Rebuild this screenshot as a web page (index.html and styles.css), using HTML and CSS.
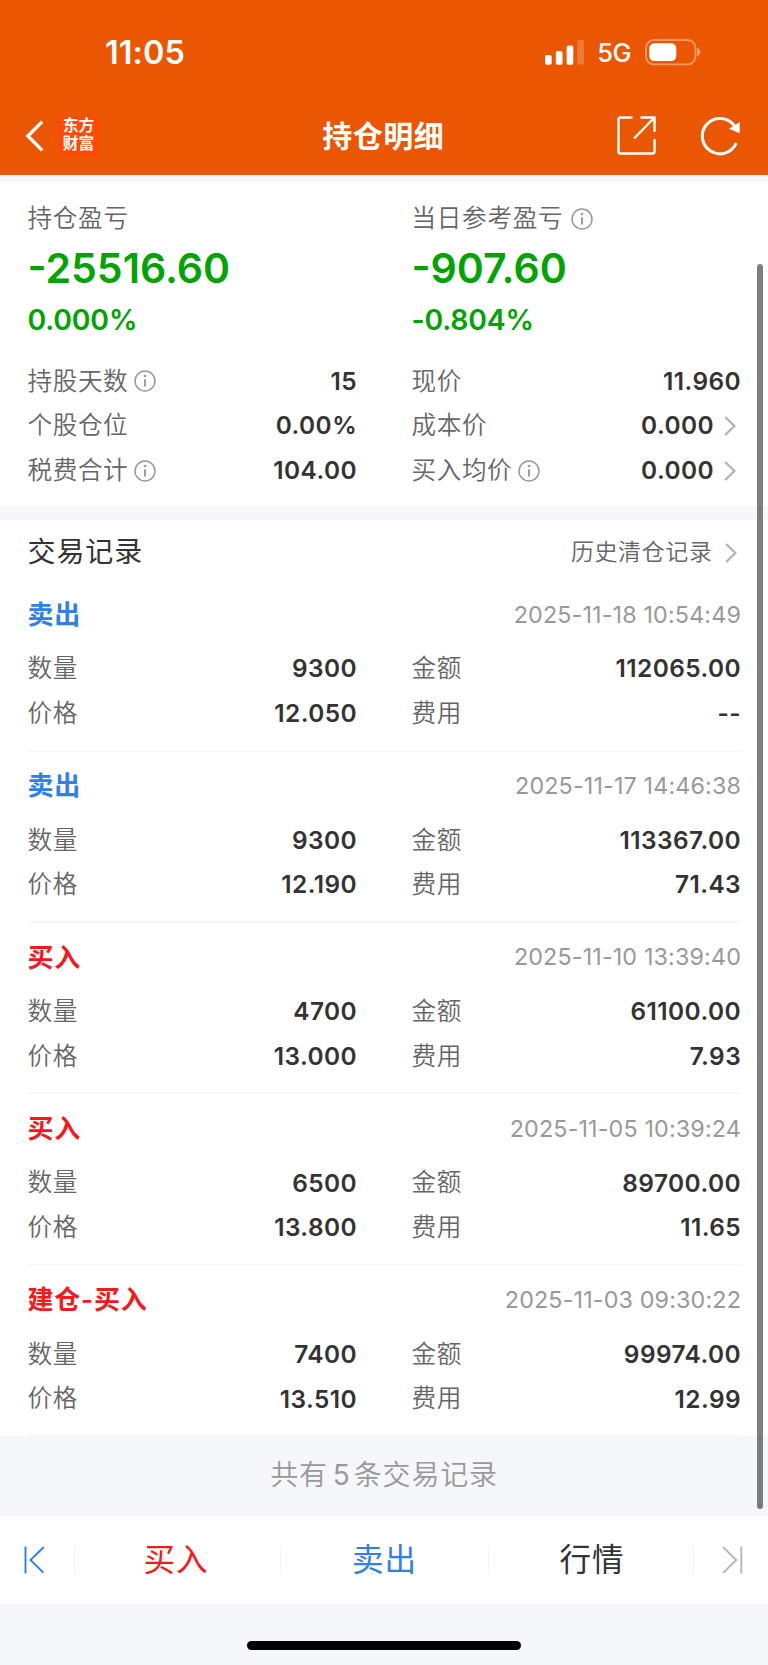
FILE: index.html
```html
<!DOCTYPE html>
<html lang="zh-CN">
<head>
<meta charset="utf-8">
<title>持仓明细</title>
<link rel="stylesheet" href="styles.css">
</head>
<body>
<svg class="defs" width="0" height="0">
  <symbol id="info" viewBox="0 0 22 22"><circle cx="11" cy="11" r="10" fill="none" stroke="#999" stroke-width="1.5"/><circle cx="11" cy="6" r="1.3" fill="#999"/><path d="M11 9.2V16.6" stroke="#999" stroke-width="1.9" fill="none"/></symbol>
  <symbol id="chev" viewBox="0 0 12 20"><path d="M1.2 1L10.4 10L1.2 19" fill="none" stroke="#b3b3b3" stroke-width="2.4"/></symbol>
</svg>
<header class="header">
  <div class="status">
    <span class="time">11:05</span>
    <div class="signals">
      <svg class="bars" width="39" height="25" viewBox="0 0 39 25" fill="#fff"><rect x="0" y="15" width="6.7" height="9.7" rx="1.8"/><rect x="10.8" y="11" width="6.7" height="13.7" rx="1.8"/><rect x="21.6" y="5.5" width="6.7" height="19.2" rx="1.8"/><rect x="32.3" y="0" width="6.7" height="24.7" rx="1.8" opacity=".22"/></svg>
      <span class="net">5G</span>
      <svg class="battery" width="56" height="27" viewBox="0 0 56 27"><rect x="1" y="1" width="49.5" height="24.4" rx="8" fill="none" stroke="#fff" stroke-opacity=".4" stroke-width="1.9"/><rect x="4.3" y="4.3" width="27" height="17.8" rx="5" fill="#fff"/><path d="M52.2 8.8C56.2 10.2 56.2 16.2 52.2 17.6Z" fill="#fff" fill-opacity=".45"/></svg>
    </div>
  </div>
  <nav class="nav">
    <div class="nav-left">
      <svg width="19" height="32" viewBox="0 0 19 32"><path d="M17.2 1.6L2.9 16L17.2 30.4" fill="none" stroke="#fff" stroke-width="3.4"/></svg>
      <div class="logo"><span>东方</span><span>财富</span></div>
    </div>
    <h1 class="title">持仓明细</h1>
    <div class="nav-right">
      <svg width="39" height="39" viewBox="0 0 39 39" fill="none" stroke="#fff" stroke-width="2.4"><path d="M15.5 1.5H3.5A2 2 0 0 0 1.5 3.5V35.5A2 2 0 0 0 3.5 37.5H35.5A2 2 0 0 0 37.5 35.5V23M23.5 1.5H37.5V16M37.5 1.5L17 22.5"/></svg>
      <svg width="41" height="40" viewBox="0 0 41 40"><path d="M36.2 27.2A17.7 17.7 0 1 1 34.3 9.7" fill="none" stroke="#fff" stroke-width="3"/><path d="M39.7 6V17.3L29 12.8Z" fill="#fff"/></svg>
    </div>
  </nav>
</header>

<main class="main">
  <section class="summary">
    <div class="two">
      <div class="pnl"><div class="cap">持仓盈亏</div><div class="big">-25516.60</div><div class="pct">0.000%</div></div>
      <div class="pnl"><div class="cap">当日参考盈亏<svg class="info wide"><use href="#info"/></svg></div><div class="big">-907.60</div><div class="pct">-0.804%</div></div>
    </div>
    <div class="two facts">
      <div class="row"><span class="k">持股天数<svg class="info"><use href="#info"/></svg></span><b class="v">15</b></div>
      <div class="row"><span class="k">现价</span><b class="v">11.960</b></div>
      <div class="row"><span class="k">个股仓位</span><b class="v">0.00%</b></div>
      <div class="row"><span class="k">成本价</span><b class="v">0.000<svg class="chev"><use href="#chev"/></svg></b></div>
      <div class="row"><span class="k">税费合计<svg class="info"><use href="#info"/></svg></span><b class="v">104.00</b></div>
      <div class="row"><span class="k">买入均价<svg class="info"><use href="#info"/></svg></span><b class="v">0.000<svg class="chev"><use href="#chev"/></svg></b></div>
    </div>
  </section>

  <section class="trades">
    <div class="heading"><h2>交易记录</h2><span class="history">历史清仓记录<svg class="chev"><use href="#chev"/></svg></span></div>

    <article class="record">
      <div class="rec-head"><span class="sell">卖出</span><time>2025-11-18 10:54:49</time></div>
      <div class="two">
        <div class="row"><span class="k">数量</span><b class="v">9300</b></div><div class="row"><span class="k">金额</span><b class="v">112065.00</b></div>
        <div class="row"><span class="k">价格</span><b class="v">12.050</b></div><div class="row"><span class="k">费用</span><b class="v">--</b></div>
      </div>
    </article>
    <article class="record">
      <div class="rec-head"><span class="sell">卖出</span><time>2025-11-17 14:46:38</time></div>
      <div class="two">
        <div class="row"><span class="k">数量</span><b class="v">9300</b></div><div class="row"><span class="k">金额</span><b class="v">113367.00</b></div>
        <div class="row"><span class="k">价格</span><b class="v">12.190</b></div><div class="row"><span class="k">费用</span><b class="v">71.43</b></div>
      </div>
    </article>
    <article class="record">
      <div class="rec-head"><span class="buy">买入</span><time>2025-11-10 13:39:40</time></div>
      <div class="two">
        <div class="row"><span class="k">数量</span><b class="v">4700</b></div><div class="row"><span class="k">金额</span><b class="v">61100.00</b></div>
        <div class="row"><span class="k">价格</span><b class="v">13.000</b></div><div class="row"><span class="k">费用</span><b class="v">7.93</b></div>
      </div>
    </article>
    <article class="record">
      <div class="rec-head"><span class="buy">买入</span><time>2025-11-05 10:39:24</time></div>
      <div class="two">
        <div class="row"><span class="k">数量</span><b class="v">6500</b></div><div class="row"><span class="k">金额</span><b class="v">89700.00</b></div>
        <div class="row"><span class="k">价格</span><b class="v">13.800</b></div><div class="row"><span class="k">费用</span><b class="v">11.65</b></div>
      </div>
    </article>
    <article class="record">
      <div class="rec-head"><span class="buy">建仓-买入</span><time>2025-11-03 09:30:22</time></div>
      <div class="two">
        <div class="row"><span class="k">数量</span><b class="v">7400</b></div><div class="row"><span class="k">金额</span><b class="v">99974.00</b></div>
        <div class="row"><span class="k">价格</span><b class="v">13.510</b></div><div class="row"><span class="k">费用</span><b class="v">12.99</b></div>
      </div>
    </article>
  </section>
  <p class="total">共有<span class="count">5</span>条交易记录</p>
</main>

<footer class="tabs">
  <a class="tab prev"><svg width="21" height="28" viewBox="0 0 21 28" fill="none" stroke="#2f80e7" stroke-width="1.9"><path d="M1.5 .5V27.5M19.8 1L6.5 14L19.3 26.7"/></svg></a>
  <a class="tab buy">买入</a>
  <a class="tab sell">卖出</a>
  <a class="tab quote">行情</a>
  <a class="tab next"><svg width="21" height="28" viewBox="0 0 21 28" fill="none" stroke="#b8b8b8" stroke-width="1.9"><path d="M19.3 .5V27.5M1 1L14.3 14L1.3 26.7"/></svg></a>
</footer>
<div class="home"><i></i></div>
<div class="scrollbar"></div>
</body>
</html>
```
FILE: styles.css
```css
* { box-sizing: border-box; }
body {
  margin: 0;
  width: 768px;
  height: 1665px;
  position: relative;
  overflow: hidden;
  display: flex;
  flex-direction: column;
  background: #f6f7fa;
  color: #333;
  font-family: Inter, "Noto Sans CJK SC", sans-serif;
  font-size: 24.6px;
  line-height: 1.2;
}
svg { display: block; flex: none; }
.defs { position: absolute; }

.header { height: 174.5px; background: #ea5602; color: #fff; }
.status { height: 98px; padding: 6px 67.5px 0 105px; display: flex; align-items: center; justify-content: space-between; }
.time { padding-top: 2px; font-size: 32.4px; font-weight: 600; letter-spacing: 0.1px; }
.signals { display: flex; align-items: center; }
.net { margin: 2px 13.5px 0 13px; font-size: 25.5px; font-weight: 500; letter-spacing: -0.6px; }
.nav { height: 76px; padding: 0 27.5px 0 25px; display: grid; grid-template-columns: 1fr auto 1fr; align-items: center; }
.nav-left, .nav-right { display: flex; align-items: center; }
.nav-left { gap: 13.5px; }
.nav-left, .nav-right { margin-top: -1px; }
.nav-right { justify-content: flex-end; gap: 43.5px; }
.title { margin: 0 0 1px 1px; font-size: 30px; font-weight: 600; letter-spacing: 0.5px; line-height: 40px; }
.logo { width: 42px; height: 42px; padding-bottom: 1px; border-radius: 8px; background: #ff4a04; display: flex; flex-direction: column; align-items: center; justify-content: center; font-size: 15.8px; font-weight: 700; line-height: 18px; }

.main { margin-top: 7px; }
.summary { height: 324px; padding: 15.5px 27.5px 0; background: #fff; }
.two { display: grid; grid-template-columns: 1fr 1fr; column-gap: 55px; }
.cap, .big, .pct, .row, .k, .v, .heading, .history, .rec-head { display: flex; align-items: center; }
.cap { height: 44px; color: #666; letter-spacing: 0.7px; }
.cap, .k { font-weight: 350; }
.big { height: 56px; padding-bottom: 1px; font-size: 41px; font-weight: 600; color: #00a400; }
.pct { height: 48px; padding-bottom: 2px; font-size: 28.4px; font-weight: 600; letter-spacing: -0.2px; color: #00a400; }
.facts { margin-top: 14.2px; }
.row { height: 44.6px; justify-content: space-between; }
.k { color: #666; letter-spacing: 0.6px; }
.v { margin-right: -0.6px; font-size: 24.4px; font-weight: 600; letter-spacing: 0.45px; }
.info { width: 22px; height: 22px; margin: 0 0 0 5.5px; }
.info.wide { margin: -1px 0 0 8px; }
.chev { width: 12px; height: 20px; margin: 0 5px 0 10px; }

.trades { margin-top: 14.5px; padding: 5px 27.5px 0; background: #fff; }
.heading { height: 55.2px; justify-content: space-between; }
.heading h2 { margin: 0; font-size: 28px; font-weight: 400; letter-spacing: 0.9px; }
.history { color: #666; font-size: 23px; font-weight: 350; letter-spacing: 0.6px; }
.history .chev { margin: 0 4px 0 12px; }
.record { padding: 4px 0 13.6px; border-bottom: 2px solid #f6f7f9; }
.rec-head { height: 62.6px; padding-bottom: 2px; justify-content: space-between; font-size: 26px; font-weight: 600; letter-spacing: 0.8px; }
.rec-head time { margin-right: -0.5px; color: #999; font-size: 23.3px; font-weight: 400; letter-spacing: 0.15px; }
.record:last-child { border-bottom-width: 1px; }
.sell { color: #2f80e7; }
.buy { color: #f5191c; }
.total { height: 80.4px; margin: 0; display: flex; align-items: center; justify-content: center; color: #999; font-size: 28px; font-weight: 350; letter-spacing: 0.8px; }
.count { padding: 0 4px 0 5px; font-weight: 400; letter-spacing: 0; }

.tabs { height: 88px; background: #fff; display: grid; grid-template-columns: 75px 206px 208px 205px 74px; align-items: center; }
.tab { height: 30px; padding-bottom: 1px; display: flex; align-items: center; justify-content: center; font-size: 31.6px; letter-spacing: 0.8px; border-right: 1.5px solid #f2f2f2; }
.tab.buy { padding-right: 3px; }
.quote { padding-left: 2px; }
.prev { padding-right: 5px; }
.next { border: 0; padding-left: 2px; }
.home { flex: 1; display: flex; justify-content: center; }
.home i { width: 274px; height: 9px; margin-top: 37px; border-radius: 5px; background: #000; }
.scrollbar { position: absolute; left: 757px; top: 264px; width: 5.5px; height: 1245px; border-radius: 3px; background: rgba(0, 0, 0, 0.5); }
```
